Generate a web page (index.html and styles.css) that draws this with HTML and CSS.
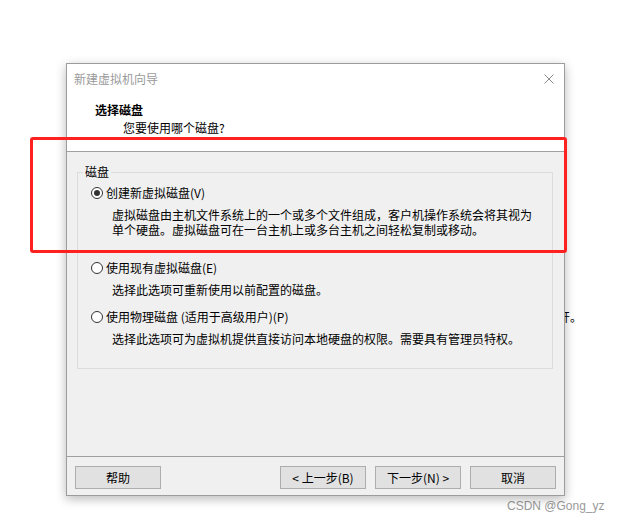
FILE: index.html
```html
<!DOCTYPE html>
<html lang="zh-CN">
<head>
<meta charset="utf-8">
<title>新建虚拟机向导</title>
<link rel="stylesheet" href="styles.css">
</head>
<body>
<div class="stage">
  <span class="behind-text">开。</span>
  <div class="dialog">
    <div class="header">
      <div class="titlebar">
        <span class="title">新建虚拟机向导</span>
        <svg class="close" width="10" height="10" viewBox="0 0 10 10"><path d="M0.5 0.5L9.5 9.5M9.5 0.5L0.5 9.5" stroke="#8a8a8a" stroke-width="1" fill="none"/></svg>
      </div>
      <div class="heading">选择磁盘</div>
      <div class="subheading">您要使用哪个磁盘?</div>
    </div>
    <div class="content">
      <fieldset class="group">
        <legend>磁盘</legend>
        <div class="option">
          <div class="radio-row"><span class="radio checked"></span><span>创建新虚拟磁盘(V)</span></div>
          <div class="desc">虚拟磁盘由主机文件系统上的一个或多个文件组成，客户机操作系统会将其视为<br>单个硬盘。虚拟磁盘可在一台主机上或多台主机之间轻松复制或移动。</div>
        </div>
        <div class="option opt2">
          <div class="radio-row"><span class="radio"></span><span>使用现有虚拟磁盘(E)</span></div>
          <div class="desc">选择此选项可重新使用以前配置的磁盘。</div>
        </div>
        <div class="option opt3">
          <div class="radio-row"><span class="radio"></span><span>使用物理磁盘 (适用于高级用户)(P)</span></div>
          <div class="desc">选择此选项可为虚拟机提供直接访问本地硬盘的权限。需要具有管理员特权。</div>
        </div>
      </fieldset>
    </div>
    <div class="footer">
      <button class="btn">帮助</button>
      <div class="spacer"></div>
      <button class="btn">&lt; 上一步(B)</button>
      <button class="btn">下一步(N) &gt;</button>
      <button class="btn">取消</button>
    </div>
  </div>
  <div class="highlight"></div>
  <div class="watermark">CSDN @Gong_yz</div>
</div>
</body>
</html>
```

FILE: styles.css
```css
html, body {
  margin: 0;
  padding: 0;
  background: #ffffff;
}
body {
  font-family: "Noto Sans CJK SC", "Noto Sans", sans-serif;
  font-size: 12px;
  color: #000;
}
.stage {
  position: relative;
  width: 618px;
  height: 522px;
  padding: 63px 0 0 66px;
  box-sizing: border-box;
}
.behind-text {
  position: absolute;
  left: 558px;
  top: 309px;
  line-height: 16px;
  font-size: 12px;
  color: #000;
  z-index: 0;
}
.dialog {
  position: relative;
  z-index: 1;
  width: 499px;
  height: 433px;
  box-sizing: border-box;
  border: 1px solid #9c9c9c;
  background: #f0f0f0;
  box-shadow: 0 3px 10px rgba(0, 0, 0, 0.28);
  display: flex;
  flex-direction: column;
}
.header {
  background: #ffffff;
  height: 88px;
  box-sizing: border-box;
  border-bottom: 1px solid #a0a0a0;
}
.titlebar {
  height: 30px;
  display: flex;
  align-items: center;
  justify-content: space-between;
  padding: 0 10px 0 7px;
}
.title {
  color: #9a9a9a;
  line-height: 16px;
}
.close {
  display: block;
}
.heading {
  font-weight: bold;
  line-height: 16px;
  margin-top: 8px;
  padding-left: 28px;
}
.subheading {
  line-height: 16px;
  margin-top: 2px;
  padding-left: 56px;
}
.content {
  flex: 1;
  padding: 12px 11px 0 10px;
  border-bottom: 1px solid #a0a0a0;
}
.group {
  margin: 0;
  height: 205px;
  box-sizing: border-box;
  border: 1px solid #dcdcdc;
  padding: 5px 10px 0 13px;
}
.group legend {
  padding: 0 2px;
  margin-left: -8px;
  line-height: 16px;
}
.radio-row {
  display: flex;
  align-items: center;
  gap: 3px;
  line-height: 16px;
}
.radio {
  width: 12px;
  height: 12px;
  box-sizing: border-box;
  border: 1px solid #333333;
  border-radius: 50%;
  background: #ffffff;
  display: flex;
  align-items: center;
  justify-content: center;
  flex: none;
}
.radio.checked::after {
  content: "";
  width: 6px;
  height: 6px;
  border-radius: 50%;
  background: #333333;
}
.desc {
  margin-top: 6px;
  padding-left: 21px;
  line-height: 15px;
}
.opt2 {
  margin-top: 23px;
}
.opt3 {
  margin-top: 12px;
}
.footer {
  height: 38px;
  box-sizing: border-box;
  display: flex;
  align-items: flex-start;
  padding: 9px 8px 0 8px;
  gap: 9px;
}
.spacer {
  flex: 1;
}
.btn {
  width: 86px;
  height: 23px;
  box-sizing: border-box;
  border: 1px solid #adadad;
  background: #e1e1e1;
  font-family: "Noto Sans CJK SC", "Noto Sans", sans-serif;
  font-size: 12px;
  color: #000;
  padding: 0;
  line-height: 20px;
}
.highlight {
  position: absolute;
  left: 30px;
  top: 137px;
  width: 537px;
  height: 116px;
  box-sizing: border-box;
  border: 3px solid #ff2020;
  border-radius: 3px;
  z-index: 2;
}
.watermark {
  position: absolute;
  left: 507px;
  top: 498px;
  font-family: "Liberation Sans", Arial, sans-serif;
  font-size: 12px;
  line-height: 16px;
  color: #9a9a9a;
}
```
